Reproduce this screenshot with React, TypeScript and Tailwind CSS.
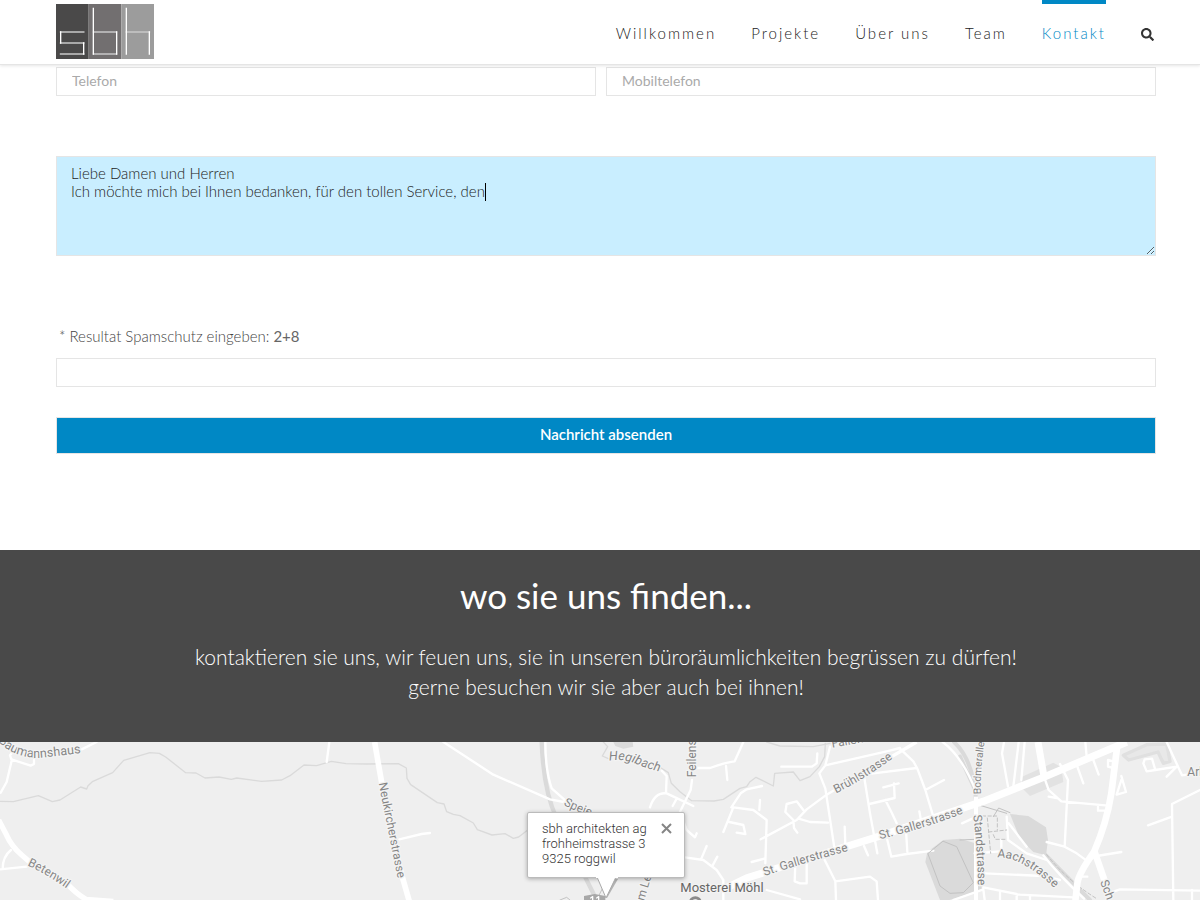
import { useState } from "react";
import { FaSearch } from "react-icons/fa";

const navItems = [
  { label: "Willkommen", href: "#willkommen" },
  { label: "Projekte", href: "#projekte" },
  { label: "Über uns", href: "#ueber-uns" },
  { label: "Team", href: "#team" },
  { label: "Kontakt", href: "#kontakt", active: true },
];

const fieldClass =
  "block h-[29px] w-full border border-[#e5e5e5] bg-white px-[15px] pb-[2px] text-sm text-[#444] outline-none placeholder:text-[#aaa]";

const Logo = () => (
  <svg width="98" height="55" viewBox="0 0 294 165" aria-hidden="true">
    <rect width="98" height="165" fill="#4a4949" />
    <rect x="98" width="98" height="165" fill="#726f70" />
    <rect x="196" width="98" height="165" fill="#9c9c9c" />
    <g fill="none" strokeLinecap="square">
      <path
        stroke="#c8c8c8"
        strokeWidth="5"
        d="M14 84H83M14 117H83M14 150H83M113 84H181M113 150H181M211 84H280"
      />
      <path
        stroke="#fff"
        strokeWidth="4"
        d="M14 84V117M83 117V150M112 13V150M182 84V150M211 13V150M280 84V150"
      />
    </g>
  </svg>
);

const Header = () => (
  <header className="relative z-10 border-b border-[#e5e5e5] bg-white pr-11 pl-14 shadow-[0_1px_3px_rgba(0,0,0,0.1)]">
    <div className="flex h-16 items-start justify-between">
      <a href="#willkommen" aria-label="sbh" className="mt-1">
        <Logo />
      </a>
      <nav className="flex h-full gap-[35px]">
        {navItems.map((item) => (
          <a
            key={item.label}
            href={item.href}
            className={`flex items-center border-t-4 pb-[2px] text-[15px] font-light tracking-[2px] ${
              item.active
                ? "border-[#0088c5] text-[#0088c5]"
                : "border-transparent text-[#222]"
            }`}
          >
            {item.label}
          </a>
        ))}
        <button type="button" aria-label="Suche" className="mt-1 mr-[2px] text-[#333]">
          <FaSearch size={13} />
        </button>
      </nav>
    </div>
  </header>
);

const ContactForm = () => {
  const [message, setMessage] = useState(
    "Liebe Damen und Herren\nIch möchte mich bei Ihnen bedanken, für den tollen Service, den",
  );

  return (
    <form
      className="pt-[2px] pr-11 pb-24 pl-14"
      onSubmit={(e) => e.preventDefault()}
    >
      <div className="flex gap-[10px]">
        <div className="w-[540px] shrink">
          <input type="tel" aria-label="Telefon" placeholder="Telefon" className={fieldClass} />
        </div>
        <div className="flex-1">
          <input
            type="tel"
            aria-label="Mobiltelefon"
            placeholder="Mobiltelefon"
            className={fieldClass}
          />
        </div>
      </div>

      <div className="relative mt-[60px]">
        <textarea
          aria-label="Nachricht"
          value={message}
          onChange={(e) => setMessage(e.target.value)}
          className="block h-[100px] w-full resize border border-[#e5e5e5] bg-[#c9eeff] px-[14px] py-[7px] text-[15px] leading-[18px] font-light text-[#222] outline-none"
        />
        <span className="absolute top-[27px] left-[429px] h-[18px] w-px bg-black" />
      </div>

      <label
        htmlFor="spam"
        className="mt-[70px] block pl-[3px] text-[15px] leading-5 font-light text-[#444]"
      >
        * Resultat Spamschutz eingeben: <span className="font-normal text-[#666]">2+8</span>
      </label>
      <input id="spam" type="text" className={`mt-3 ${fieldClass}`} />

      <button
        type="submit"
        className="mt-[30px] block h-[37px] w-full border border-[#e5e5e5] bg-[#0088c5] pb-[2px] text-[15px] font-semibold text-white"
      >
        Nachricht absenden
      </button>
    </form>
  );
};

const LocationMap = () => (
  <svg
    className="block h-[158px] w-full"
    viewBox="0 6 3600 474"
    preserveAspectRatio="xMidYMin slice"
    fill="none"
    strokeLinecap="round"
    strokeLinejoin="round"
  >
    <defs>
      <path id="baumannshaus" d="M-6 4Q50 60 130 52T290 32" />
      <path id="betenwil" d="M82 376Q150 408 214 456" />
      <path id="neukircher" d="M1136 130L1202 460" />
      <path id="speicher" d="M1690 194Q1740 222 1800 236" />
      <path id="hegibach" d="M1828 62Q1870 54 1920 76T2020 98" />
      <path id="feilen" d="M2088 112V-60" />
      <path id="amle" d="M1932 484L1966 370" />
      <path id="bruehl" d="M2508 160Q2602 114 2700 38" />
      <path id="fallen" d="M2497 23L2640 -2" />
      <path id="galler1" d="M2294 408Q2420 366 2570 326" />
      <path id="galler2" d="M2640 298Q2780 264 2910 212" />
      <path id="bodmer" d="M2943 162Q2938 100 2960 -40" />
      <path id="stand" d="M2920 226Q2934 340 2934 460" />
      <path id="aach" d="M2992 352Q3070 350 3175 456" />
      <path id="schul" d="M3300 425L3340 530" />
    </defs>

    <rect width="3600" height="480" fill="#efefef" />

    {/* Parks, ponds and built-up areas */}
    <g fill="#dadada">
      <path d="M1840 6L1898 6L1900 20L1870 26L1846 18Z" />
      <path d="M2782 336L2830 300L2880 296L2926 310L2946 450L2848 480L2820 480L2776 366Z" />
      <path d="M3030 222L3085 228L3138 262L3144 300L3138 346L3100 336L3060 296Z" />
      <path fill="#e2e2e2" d="M3066 110L3160 68L3184 82L3190 126L3090 168L3066 144Z" />
      <path
        stroke="#e0e0e0"
        strokeWidth="10"
        fill="#e8e8e8"
        d="M3370 46L3440 14L3500 12L3510 64L3490 70L3474 36L3386 60Z"
      />
    </g>

    {/* Streams */}
    <g stroke="#dadada" strokeWidth="4">
      <path d="M0 184L40 185L115 167L157 185L180 180L242 141L260 147L264 137L277 125L338 98L371 61L450 38L478 40L497 51L557 98L588 99L615 114L657 111L694 118L710 114L785 124L845 120L870 107L912 75L950 77L994 64L1038 71L1100 72L1195 71L1219 84L1221 115L1232 134L1312 188L1332 192L1340 215L1360 223L1380 227L1420 249L1432 269L1476 285L1515 281L1540 295L1556 291L1586 268" />
      <path d="M1810 6L1823 20L1807 48L1825 56M1980 82L2005 98L2014 130L2040 155L2075 182L2142 183L2170 178L2220 145L2240 140L2250 125L2268 112L2320 138L2324 100L2380 96L2400 122L2430 110L2458 80L2474 50L2476 10" />
      <path d="M2300 6L2340 18L2440 20L2490 10" />
    </g>
    <g stroke="#dadada">
      <path strokeWidth="13" d="M1625 6Q1630 150 1670 236T1790 480" />
      <path strokeWidth="12" d="M2862 6Q2920 60 2928 180M2880 50L2930 160M3136 344Q3200 410 3270 480" />
    </g>

    {/* Side streets */}
    <g stroke="#fff" strokeWidth="7">
      <path d="M290 6L245 28M36 58L20 126L2 158M40 34L30 46L34 58L92 77L102 72V60M33 330Q8 350 8 386M0 388L80 380" />
      <path d="M988 6L980 66M1198 298L1265 282L1290 279M1330 6L1480 104L1650 178L1692 186M1636 6Q1636 90 1655 145L1700 185" />
      <path d="M1985 92L2000 108L1998 158M1950 202Q1964 156 2000 160L2080 198M2076 120L2072 150L2040 215L2060 270L2085 292L2090 280M2030 176L2018 198M2090 84H2130Q2180 66 2204 64L2230 6M2178 78L2182 120M2055 352L2110 360L2150 390L2170 420V480M2104 356L2120 318M2138 376L2152 350" />
      <path d="M2194 202L2222 160L2240 148L2286 138M2170 276L2200 202L2260 210L2300 240L2296 370M2278 210L2280 180M2188 246L2230 255L2236 282L2210 278M2255 366L2296 355M2282 298L2390 240L2420 208L2480 164L2520 140M2410 210L2390 184L2360 192L2356 216L2380 240L2382 264L2392 278M2396 236L2430 246L2484 248" />
      <path d="M2490 20L2476 76L2458 100L2476 146L2492 250L2504 330M2344 80H2436L2450 70L2452 40M2476 76L2660 34L2700 24M2592 108L2610 220L2632 340M2590 104L2750 84M2700 26L2740 64L2752 86L2776 150L2800 230M2776 150L2832 120M2608 192L2684 174L2682 130M2650 142L2696 130M2656 180L2676 220L2690 250M2534 260L2536 312M2592 318L2604 346M2662 300L2674 350L2720 342L2800 332M2718 270L2722 336M2758 214L2762 236M2386 370L2384 424L2400 430H2420V370M2474 360L2506 424L2508 480M2506 424L2610 410L2630 424L2634 480M2300 450L2400 478" />
      <path d="M2828 6Q2888 50 2930 160M3012 6L3006 40L3024 140M3040 140L3056 6M3064 120L3074 6M2886 250L2930 230M3020 230L3024 300L3080 340L3140 360M3026 250L3080 320M3140 306L3194 320L3204 120L3180 72M3134 116L3146 150L3184 184L3316 196M3146 170L3170 174M3194 320L3230 340L3260 362M3256 6L3260 50M3280 60L3296 104M3232 80L3250 130M3294 200V212H3316" />
      <path d="M3364 120L3350 164L3378 156L3364 108M3340 64L3324 60L3324 80L3340 84M3430 70L3440 94L3466 90L3456 56L3434 58ZM3466 90L3530 80L3500 110M3500 6L3546 106L3560 104M3444 256L3516 230M3520 480L3516 192L3600 150M3290 348L3364 336M3330 458L3360 448L3600 452M3576 450V480" />
      <path d="M2954 400L3130 408L3180 420M2950 442L3060 464L3220 472M2924 340L3000 334M2860 480L2950 448L2954 480M3004 300V334M3000 458V480M3050 462V480M3090 466V480M3130 346Q3180 410 3252 476M3240 410H3262" />
    </g>

    {/* Footpaths */}
    <g stroke="#c2c2c2" strokeWidth="3">
      <path d="M2784 342L2820 438L2850 460L2890 458L2920 428L2870 320L2830 304ZM2880 300L2924 298M2940 196L3020 220M2980 230L2996 204L3030 218" />
      <path strokeDasharray="10 7" d="M2930 228H2990M2962 234L2972 340M2992 234V270M2966 276L3020 270M2980 284L2986 298H3020M3140 344Q3200 420 3290 476" />
      <path d="M1790 480L1810 440M1680 480L1700 472L1710 480" />
    </g>

    {/* Main roads */}
    <g stroke="#fff" strokeLinecap="butt">
      <path strokeWidth="16" d="M-4 240L20 286Q34 318 66 346L92 368M200 430Q230 462 258 478L340 484" />
      <path strokeWidth="17" d="M1124 6Q1138 90 1160 210T1228 484" />
      <path strokeWidth="22" d="M2170 448L2240 414L2640 288L2950 184L3130 112L3380 6" />
      <path strokeWidth="21" d="M3114 6L3132 110" />
      <path strokeWidth="20" d="M3352 16L3334 160Q3320 250 3282 336Q3236 400 3232 430L3226 484M3284 336L3320 440" />
      <path strokeWidth="12" d="M2928 170V480" />
      <path strokeWidth="10" d="M2520 140L2750 6" />
    </g>

    {/* Street names */}
    <g
      fill="#858585"
      stroke="#f3f3f3"
      strokeWidth="8"
      fontSize="36"
      style={{ fontFamily: "Roboto, sans-serif", paintOrder: "stroke" }}
    >
      <text fontSize="38"><textPath href="#baumannshaus">Baumannshaus</textPath></text>
      <text><textPath href="#betenwil">Betenwil</textPath></text>
      <text><textPath href="#neukircher">Neukircherstrasse</textPath></text>
      <text><textPath href="#speicher">Speie</textPath></text>
      <text fontSize="38" fontStyle="italic"><textPath href="#hegibach">Hegibach</textPath></text>
      <text><textPath href="#feilen">Feilens</textPath></text>
      <text><textPath href="#amle">m Le</textPath></text>
      <text><textPath href="#bruehl">Brühlstrasse</textPath></text>
      <text><textPath href="#fallen">Fallen</textPath></text>
      <text><textPath href="#galler1">St. Gallerstrasse</textPath></text>
      <text><textPath href="#galler2">St. Gallerstrasse</textPath></text>
      <text fontSize="31"><textPath href="#bodmer">Bodmeralle</textPath></text>
      <text><textPath href="#stand">Standstrasse</textPath></text>
      <text><textPath href="#aach">Aachstrasse</textPath></text>
      <text><textPath href="#schul">Sch</textPath></text>
      <text x="3562" y="108">Arb</text>
      <text x="2041" y="457" fill="#666" fontSize="39">Mosterei Möhl</text>
    </g>

    <circle cx="2086" cy="488" r="15" stroke="#8a8a8a" strokeWidth="9" fill="#fff" />
    <path fill="#a8a8a8" d="M1752 468L1784 462L1816 468V480H1752Z" />
    <path stroke="#fff" strokeWidth="4" d="M1772 474L1778 470V480M1790 474L1796 470V480" />
  </svg>
);

const InfoWindow = () => (
  <div className="relative flex h-[66px] w-[158px] items-start justify-between rounded-[2px] border border-[#bbb] bg-white py-2 pr-3 pl-[14px] font-[Roboto,sans-serif] text-[13px] leading-[15px] font-light text-[#333] shadow-[0_1px_4px_rgba(0,0,0,0.3)]">
    <address className="whitespace-nowrap not-italic">
      sbh architekten ag
      <br />
      frohheimstrasse 3
      <br />
      9325 roggwil
    </address>
    <button type="button" aria-label="Schliessen" className="mt-[2px]">
      <svg width="11" height="11" viewBox="0 0 11 11" stroke="#858585" strokeWidth="2">
        <path d="M1 1L10 10M10 1L1 10" />
      </svg>
    </button>
    <svg
      className="absolute top-[63px] left-[68px]"
      width="22"
      height="23"
      viewBox="0 0 22 23"
    >
      <path d="M4 4L11 22L22 3" fill="#000" opacity="0.25" />
      <path d="M1 1L10 22L20 1" fill="#fff" stroke="#aaa" />
      <path d="M0 0H22V2H0Z" fill="#fff" />
    </svg>
  </div>
);

const App = () => (
  <div className="min-h-screen overflow-hidden bg-white font-[Lato,'Open_Sans',sans-serif]">
    <Header />
    <main>
      <ContactForm />

      <section className="bg-[#494949] pt-[25px] pr-11 pb-10 pl-14 text-center text-white">
        <h2 className="text-[35px] leading-10">wo sie uns finden...</h2>
        <p className="mt-[27px] text-[21px] leading-[30px] font-light">
          kontaktieren sie uns, wir feuen uns, sie in unseren büroräumlichkeiten
          begrüssen zu dürfen!
          <br />
          gerne besuchen wir sie aber auch bei ihnen!
        </p>
      </section>

      <section aria-label="Karte" className="relative overflow-hidden">
        <LocationMap />
        <div className="absolute inset-0 flex justify-center pt-[70px] pr-11 pl-14">
          <InfoWindow />
        </div>
      </section>
    </main>
  </div>
);

export default App;
